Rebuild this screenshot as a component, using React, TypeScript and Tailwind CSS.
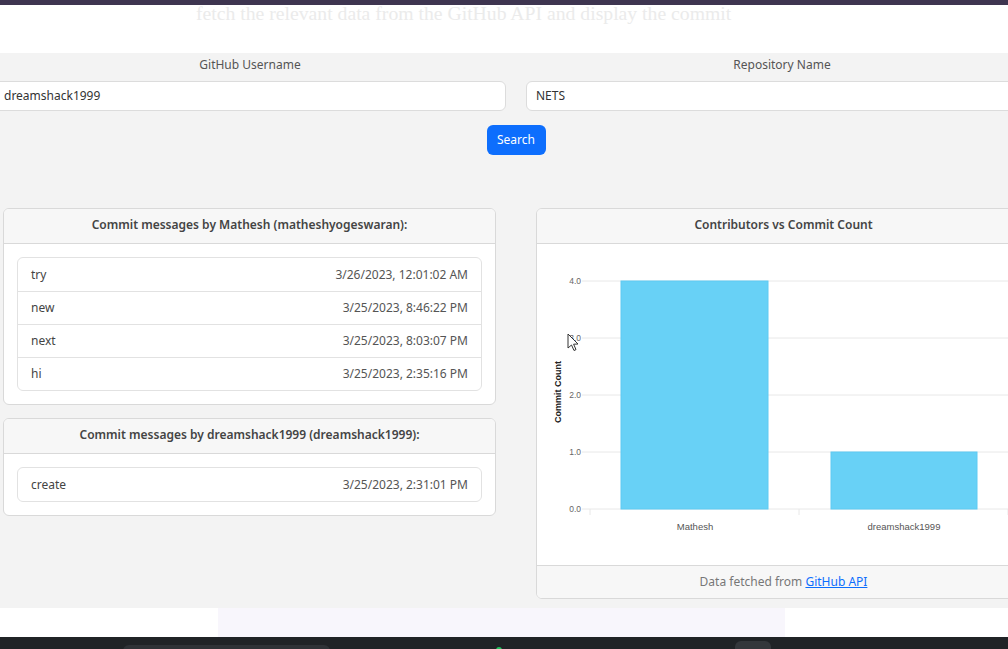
import React from 'react';

const commitsMathesh = [
  { msg: 'try', date: '3/26/2023, 12:01:02 AM' },
  { msg: 'new', date: '3/25/2023, 8:46:22 PM' },
  { msg: 'next', date: '3/25/2023, 8:03:07 PM' },
  { msg: 'hi', date: '3/25/2023, 2:35:16 PM' },
];

const commitsDream = [{ msg: 'create', date: '3/25/2023, 2:31:01 PM' }];

function CommitCard({ title, commits }: { title: string; commits: { msg: string; date: string }[] }) {
  return (
    <div className="bg-white border border-[#d9d9d9] rounded-md overflow-hidden">
      <div className="h-[35px] bg-[#f7f7f7] border-b border-[#d9d9d9] flex items-center justify-center text-[12px] font-semibold text-[#444] pb-[2px]">
        {title}
      </div>
      <div className="p-[13px]">
        <div className="border border-[#e2e2e2] rounded-md">
          {commits.map((c, i) => (
            <div
              key={c.msg}
              className={`h-[33px] flex items-center justify-between px-[13px] text-[12px] ${
                i > 0 ? 'border-t border-[#e2e2e2]' : ''
              }`}
            >
              <span className="text-[#444]">{c.msg}</span>
              <span className="text-[#555]">{c.date}</span>
            </div>
          ))}
        </div>
      </div>
    </div>
  );
}

function Chart() {
  const grid = [
    { y: 37, label: '4.0' },
    { y: 94, label: '3.0' },
    { y: 151, label: '2.0' },
    { y: 208, label: '1.0' },
    { y: 265, label: '0.0' },
  ];
  return (
    <svg width="500" height="321" className="block">
      {grid.map((g) => (
        <g key={g.label}>
          <line x1="45" x2="500" y1={g.y} y2={g.y} stroke="#e8e8e8" strokeWidth="1" />
          <text x="44" y={g.y + 3} textAnchor="end" fontSize="8.5" fill="#666" fontFamily="Liberation Sans, Arial, sans-serif">
            {g.label}
          </text>
        </g>
      ))}
      {[53, 262, 471].map((x) => (
        <line key={x} x1={x} x2={x} y1="265" y2="271" stroke="#e8e8e8" />
      ))}
      <rect x="84" y="37" width="147" height="228" fill="#68d1f6" stroke="#5fcaf2" />
      <rect x="294" y="208" width="146" height="57" fill="#68d1f6" stroke="#5fcaf2" />
      <text x="158" y="286" textAnchor="middle" fontSize="9.5" fill="#555" fontFamily="Liberation Sans, Arial, sans-serif">
        Mathesh
      </text>
      <text x="367" y="286" textAnchor="middle" fontSize="9.5" fill="#555" fontFamily="Liberation Sans, Arial, sans-serif">
        dreamshack1999
      </text>
      <text
        x="0"
        y="0"
        transform="translate(24 148) rotate(-90)"
        textAnchor="middle"
        fontSize="9"
        fontWeight="bold"
        fill="#222"
        fontFamily="Liberation Sans, Arial, sans-serif"
      >
        Commit Count
      </text>
      <path
        d="M31 90 L31 104 L34.5 101 L37 106.5 L39 105.6 L36.6 100.2 L41 100 Z"
        fill="#fff"
        stroke="#333"
        strokeWidth="1"
        strokeLinejoin="round"
      />
    </svg>
  );
}

export default function App() {
  return (
    <div className="w-[1008px] h-[649px] overflow-hidden flex flex-col bg-white font-['Noto_Sans','Open_Sans',sans-serif]">
      <div className="h-[5px] bg-[#3e3550]" />
      <div className="h-[48px] bg-white overflow-hidden relative">
        <p className="absolute left-[196px] top-[-4px] font-['Liberation_Serif',serif] text-[19.7px] leading-[24px] text-[#ebebeb] whitespace-nowrap">
          fetch the relevant data from the GitHub API and display the commit
        </p>
      </div>

      <div className="h-[555px] bg-[#f3f3f3] overflow-hidden">
        <div className="w-[1044px] ml-[-6px] grid grid-cols-2 gap-x-5">
          <div className="flex flex-col">
            <label className="h-[28px] pt-[3px] text-center text-[12px] text-[#555]">GitHub Username</label>
            <div className="h-[30px] bg-white border border-[#dcdcdc] rounded-md flex items-center px-[9px] text-[12px] text-[#333]">
              dreamshack1999
            </div>
          </div>
          <div className="flex flex-col">
            <label className="h-[28px] pt-[3px] text-center text-[12px] text-[#555]">Repository Name</label>
            <div className="h-[30px] bg-white border border-[#dcdcdc] rounded-md flex items-center px-[9px] text-[12px] text-[#333]">
              NETS
            </div>
          </div>

          <div className="col-span-2 flex justify-center pt-[14px] pb-[53px]">
            <button className="h-[30px] w-[59px] bg-[#0d6efd] text-white text-[12px] rounded-md">Search</button>
          </div>

          <div className="ml-[9px] mr-[10px] flex flex-col gap-[13px]">
            <CommitCard title="Commit messages by Mathesh (matheshyogeswaran):" commits={commitsMathesh} />
            <CommitCard title="Commit messages by dreamshack1999 (dreamshack1999):" commits={commitsDream} />
          </div>

          <div className="ml-[10px] mr-[7px]">
            <div className="bg-white border border-[#d9d9d9] rounded-md overflow-hidden">
              <div className="h-[35px] bg-[#f7f7f7] border-b border-[#d9d9d9] flex items-center justify-center text-[12px] font-semibold text-[#444] pb-[2px]">
                Contributors vs Commit Count
              </div>
              <div className="h-[321px]">
                <Chart />
              </div>
              <div className="h-[33px] bg-[#f7f7f7] border-t border-[#d9d9d9] flex items-center justify-center text-[12px] text-[#777]">
                <span>
                  Data fetched from{' '}
                  <a className="text-[#0d6efd] underline">GitHub API</a>
                </span>
              </div>
            </div>
          </div>
        </div>
      </div>

      <div className="h-[29px] bg-white flex">
        <div className="ml-[218px] w-[567px] bg-[#f8f6fc]" />
      </div>
      <div className="h-[12px] bg-[#202326] relative">
        <div className="absolute left-[123px] top-[8px] w-[207px] h-[8px] rounded-t-md bg-[#2f3236]" />
        <div className="absolute left-[496px] top-[10px] w-[6px] h-[6px] rounded-full bg-[#22c55e]" />
        <div className="absolute left-[735px] top-[4px] w-[36px] h-[10px] rounded-t-md bg-[#34373b]" />
      </div>
    </div>
  );
}
